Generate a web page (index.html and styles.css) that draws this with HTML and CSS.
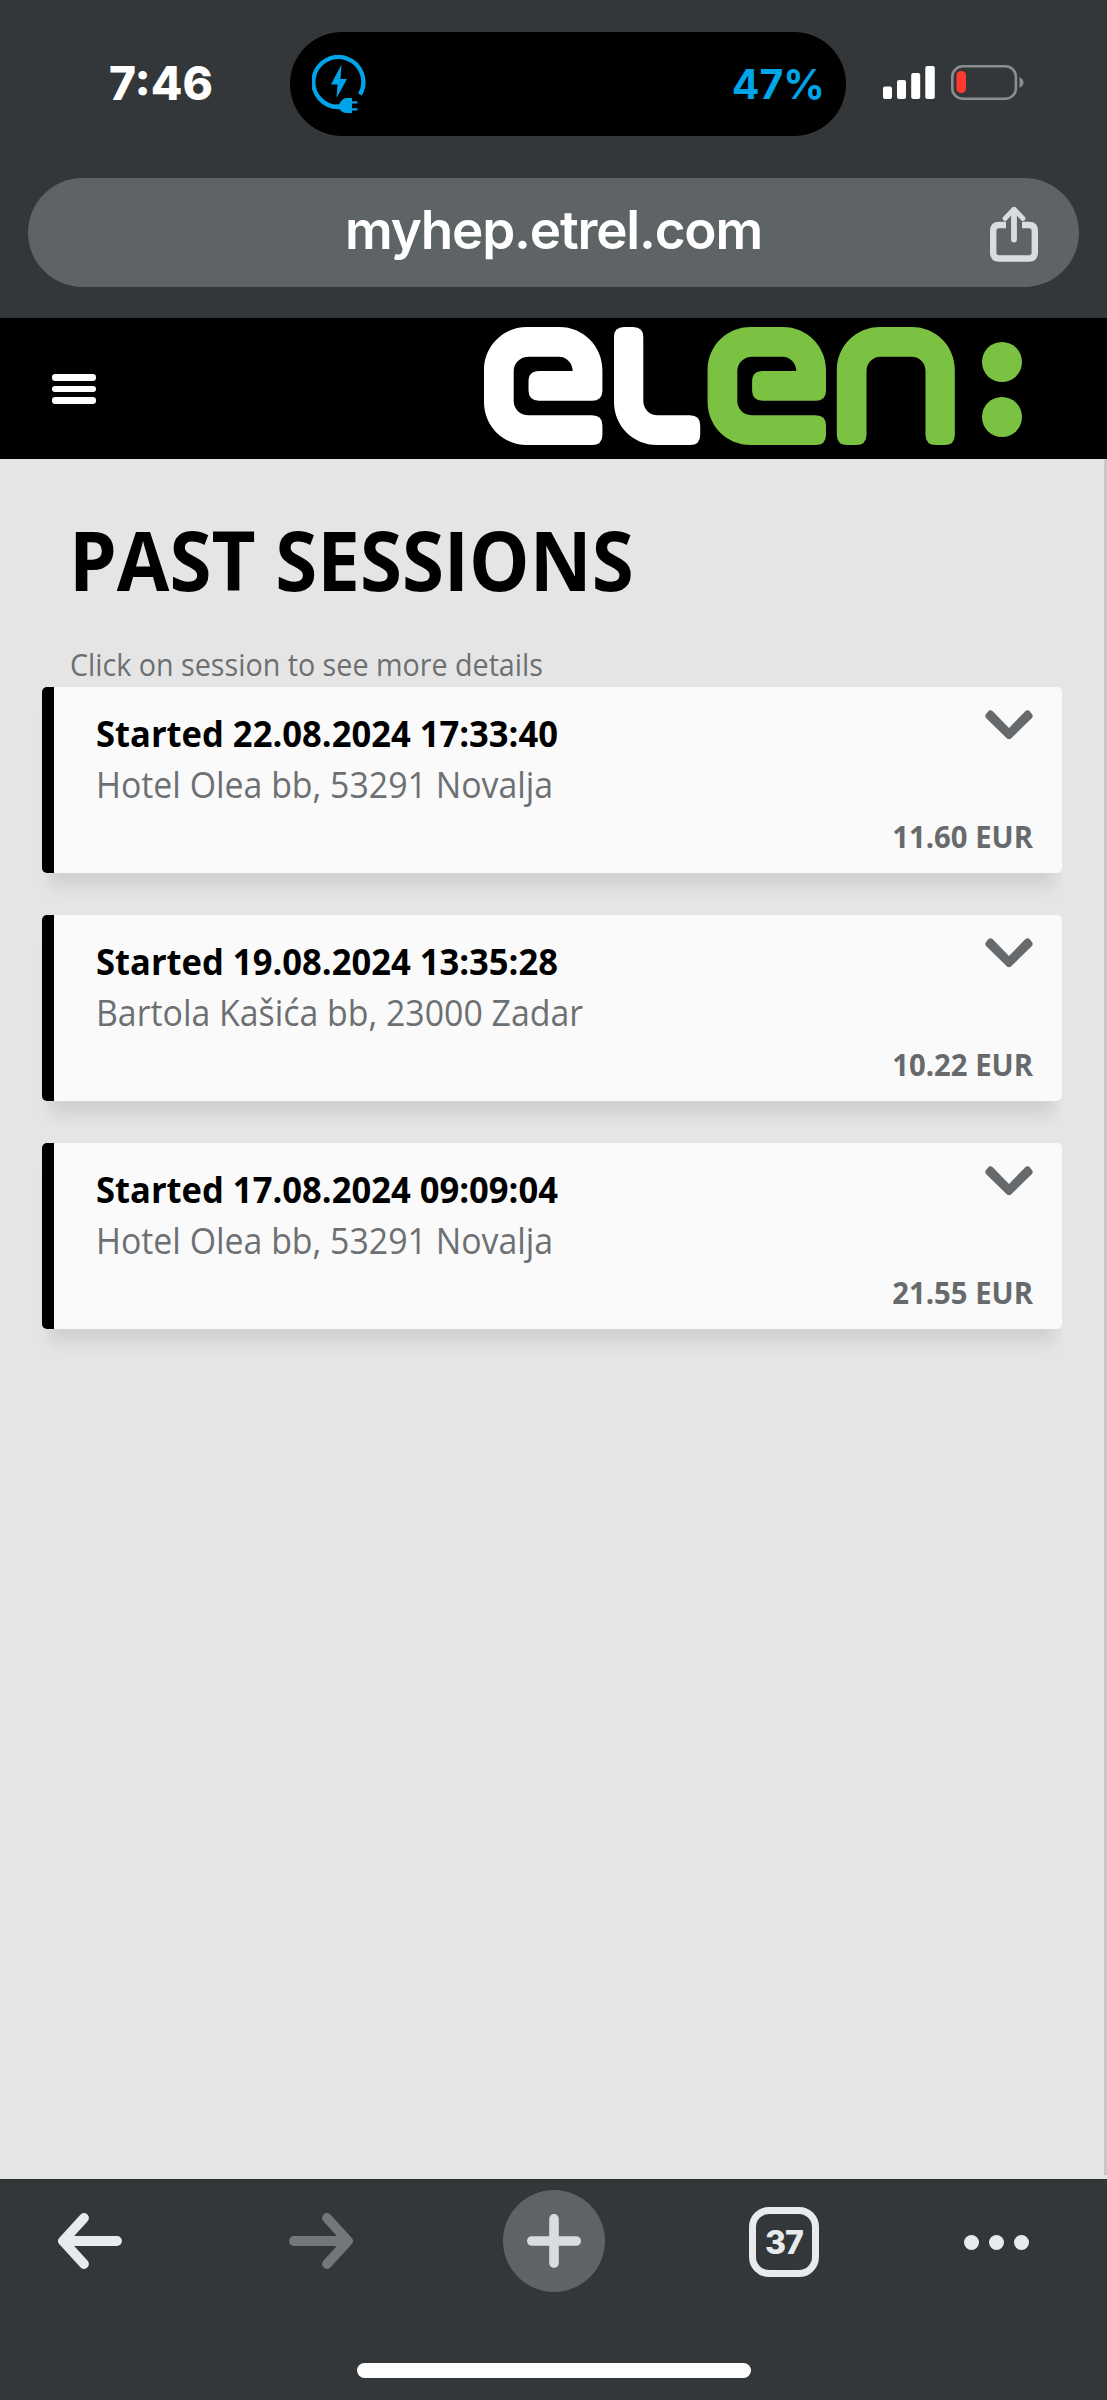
FILE: index.html
```html
<!DOCTYPE html>
<html lang="en">
<head>
    <meta charset="UTF-8">
    <meta name="viewport" content="width=device-width, initial-scale=1.0">
    <title>Past sessions - myhep.etrel.com</title>
    <link rel="stylesheet" href="styles.css">
</head>
<body>
    <div class="browser-top">
        <div class="status-bar">
            <span class="time">7:46</span>
            <div class="island">
                <svg class="charge-icon" width="56" height="60" viewBox="0 0 56 60">
                    <path d="M27 52A25 25 0 1 1 48 39.500" fill="none" stroke="#00a4e8" stroke-width="4.300"/>
                    <path d="M29.500 9.500L19 29.500h6.500L24.500 43 35 24h-6.500z" fill="#00a4e8"/>
                    <path d="M24 49.500h3c1.500-3 4-6.500 8-6.500h5v3.200h5.500v2.300H40v4.800h5.500v2.300H40V58h-5c-4 0-6.500-2-8-4.500h-3z" fill="#00a4e8"/>
                </svg>
                <span class="charge-level">47%</span>
            </div>
            <svg class="signal" width="52" height="34" viewBox="0 0 52 34" fill="#fff">
                <rect x="0" y="20.500" width="9" height="12.500" rx="2"/>
                <rect x="14" y="14" width="9" height="19" rx="2"/>
                <rect x="28.200" y="7" width="9" height="26" rx="2"/>
                <rect x="42.300" y="0" width="9.500" height="33" rx="2"/>
            </svg>
            <svg class="battery" width="73" height="35" viewBox="0 0 73 35">
                <rect x="1.300" y="1.300" width="63.600" height="32.400" rx="10.500" fill="none" stroke="#8b8d8f" stroke-width="2.600"/>
                <rect x="5.500" y="6" width="9.500" height="22" rx="4.500" fill="#ff3b30"/>
                <path d="M68.500 12q4 2.500 4 5.500t-4 5.500z" fill="#8b8d8f"/>
            </svg>
        </div>
        <div class="url-bar">
            <span class="url">myhep.etrel.com</span>
            <svg class="share" width="48" height="56" viewBox="0 0 48 56" fill="none" stroke="#dadce0" stroke-linecap="round" stroke-linejoin="round">
                <path d="M16 19H9Q3.200 19 3.200 25V46.500Q3.200 52.500 9 52.500H39Q44.800 52.500 44.800 46.500V25Q44.800 19 39 19H32" stroke-width="6.400" stroke-linecap="butt"/>
                <path d="M24 4V33.500" stroke-width="5.800"/>
                <path d="M15 12.500L24 3.200 33 12.500" stroke-width="4.800"/>
            </svg>
        </div>
    </div>

    <header class="header">
        <div class="menu">
            <span></span>
            <span></span>
            <span></span>
        </div>
        <svg class="logo" width="539" height="118" viewBox="0 0 539 118">
            <defs>
                <path id="logo-e" d="M43 0H75.500C99 0 118.400 19 118.400 43V63.700Q118.400 73.700 108 73.700H55Q44.500 73.700 44.500 63.500V54.500Q44.500 44 55 44H88.700C88.700 36 82.500 29.700 74.700 29.700H45C36 29.700 29.700 36 29.700 44V74C29.700 82 36 88.300 45 88.300H108Q118.400 88.300 118.400 98.500V108Q118.400 118 108 118H43C19 118 0 99 0 75V43C0 19 19 0 43 0Z"/>
            </defs>
            <use href="#logo-e" fill="#fff"/>
            <path d="M140 0H149Q159.300 0 159.300 10V74C159.300 82 165.500 88.300 173.700 88.300H206Q216.200 88.300 216.200 98.500V108Q216.200 118 206 118H173C149 118 130 99 130 75V10Q130 0 140 0Z" fill="#fff"/>
            <g fill="#7bc142">
                <use href="#logo-e" x="223.600"/>
                <path d="M396 0H427.800C452 0 470.800 19 470.800 43V108Q470.800 118 460.500 118H452Q441.500 118 441.500 108V44C441.500 36 436 29.700 427 29.700H397C388.500 29.700 382.500 36 382.500 44V108Q382.500 118 372 118H363.500Q352.800 118 352.800 108V43C352.800 19 372 0 396 0Z"/>
                <circle cx="518" cy="35" r="20"/>
                <circle cx="518" cy="90" r="20"/>
            </g>
        </svg>
    </header>

    <main class="content">
        <h1>PAST SESSIONS</h1>
        <p class="hint">Click on session to see more details</p>

        <div class="session">
            <div class="session-top">
                <div>
                    <div class="session-title">Started 22.08.2024 17:33:40</div>
                    <div class="session-address">Hotel Olea bb, 53291 Novalja</div>
                </div>
                <svg class="chevron" width="48" height="30" viewBox="0 0 48 30">
                    <path d="M3 1.500Q5.500-1 8 1.500L24 18 40 1.500Q42.500-1 45 1.500L46.500 3.500Q49 6 46.500 8.500L26 28.500Q24 30 22 28.500L1.500 8.500Q-1 6 1.500 3.500Z" fill="#666a6d"/>
                </svg>
            </div>
            <div class="session-price">11.60 EUR</div>
        </div>

        <div class="session">
            <div class="session-top">
                <div>
                    <div class="session-title">Started 19.08.2024 13:35:28</div>
                    <div class="session-address">Bartola Kašića bb, 23000 Zadar</div>
                </div>
                <svg class="chevron" width="48" height="30" viewBox="0 0 48 30">
                    <path d="M3 1.500Q5.500-1 8 1.500L24 18 40 1.500Q42.500-1 45 1.500L46.500 3.500Q49 6 46.500 8.500L26 28.500Q24 30 22 28.500L1.500 8.500Q-1 6 1.500 3.500Z" fill="#666a6d"/>
                </svg>
            </div>
            <div class="session-price">10.22 EUR</div>
        </div>

        <div class="session">
            <div class="session-top">
                <div>
                    <div class="session-title">Started 17.08.2024 09:09:04</div>
                    <div class="session-address">Hotel Olea bb, 53291 Novalja</div>
                </div>
                <svg class="chevron" width="48" height="30" viewBox="0 0 48 30">
                    <path d="M3 1.500Q5.500-1 8 1.500L24 18 40 1.500Q42.500-1 45 1.500L46.500 3.500Q49 6 46.500 8.500L26 28.500Q24 30 22 28.500L1.500 8.500Q-1 6 1.500 3.500Z" fill="#666a6d"/>
                </svg>
            </div>
            <div class="session-price">21.55 EUR</div>
        </div>
        <div class="scrollbar"></div>
    </main>

    <footer class="browser-bottom">
        <nav class="toolbar">
            <svg class="back" width="66" height="56" viewBox="0 0 66 56" fill="none" stroke="#e8ebee" stroke-width="9.800" stroke-linecap="round" stroke-linejoin="round">
                <path d="M60 28H6M27 5L6 28 27 51"/>
            </svg>
            <svg class="forward" width="66" height="56" viewBox="0 0 66 56" fill="none" stroke="#757678" stroke-width="9.800" stroke-linecap="round" stroke-linejoin="round">
                <path d="M6 28H60M39 5L60 28 39 51"/>
            </svg>
            <div class="new-tab">
                <svg width="54" height="54" viewBox="0 0 54 54" stroke="#dadce0" stroke-width="9.600" stroke-linecap="round">
                    <path d="M27 4.800V49.200M4.800 27H49.200"/>
                </svg>
            </div>
            <div class="tabs">37</div>
            <div class="more">
                <span></span>
                <span></span>
                <span></span>
            </div>
        </nav>
        <div class="home-indicator"></div>
    </footer>
</body>
</html>
```

FILE: styles.css
```css
* {
    box-sizing: border-box;
}

body {
    margin: 0;
    height: 2400px;
    display: flex;
    flex-direction: column;
    background: #e5e5e5;
    font-family: "Open Sans", "Noto Sans", sans-serif;
}

svg {
    display: block;
    flex-shrink: 0;
}

/* Browser top */
.browser-top {
    height: 318px;
    background: #333739;
    font-family: Inter, "Liberation Sans", sans-serif;
    color: #fff;
}

.status-bar {
    display: flex;
    align-items: center;
    height: 178px;
    padding: 0 0 11px 109px;
}

.time {
    width: 181px;
    padding-bottom: 2px;
    font-size: 46px;
    font-weight: 800;
}

.island {
    display: flex;
    justify-content: space-between;
    align-items: center;
    width: 556px;
    height: 104px;
    padding: 0 21px;
    background: #000;
    border-radius: 52px;
}

.charge-icon {
    margin: 2px 0 0 1px;
}

.charge-level {
    color: #00a4e8;
    font-size: 41px;
    font-weight: 700;
}

.signal {
    margin: -1px 0 0 37px;
}

.battery {
    margin: -2px 0 0 16px;
}

.url-bar {
    display: flex;
    align-items: center;
    height: 109px;
    margin: 0 28px;
    padding: 0 41px;
    background: #5e6366;
    border-radius: 55px;
}

.url {
    flex: 1;
    padding: 0 0 6px 48px;
    text-align: center;
    font-size: 53px;
    font-weight: 600;
    letter-spacing: -1.200px;
}

.share {
    margin-top: 3px;
}

/* Page header */
.header {
    display: flex;
    justify-content: space-between;
    align-items: center;
    height: 141px;
    padding: 0 84px 5px 52px;
    background: #000;
}

.menu {
    display: grid;
    gap: 5px;
    padding-top: 6px;
}

.menu span {
    width: 44px;
    height: 6.600px;
    background: #fff;
    border-radius: 3.300px;
}

/* Sessions */
.content {
    position: relative;
    flex: 1;
    padding: 58px 45px 0 42px;
}

h1 {
    margin: 0 0 43px 27px;
    font-size: 83px;
    line-height: 84px;
    font-weight: 700;
    transform: scaleX(0.918);
    transform-origin: left;
}

.hint {
    margin: 0 0 3px 28px;
    color: #6c7073;
    font-size: 31px;
    line-height: 40px;
    transform: scaleX(0.925);
    transform-origin: left;
}

.session {
    height: 186px;
    margin-bottom: 42px;
    padding: 22px 29px 0 42px;
    background: #fafafa;
    border-left: 12px solid #000;
    border-radius: 5px;
    box-shadow: 0 22px 15px -8px rgba(0, 0, 0, 0.09);
    clip-path: inset(0 0 -40px -20px);
}

.session-top {
    display: flex;
    justify-content: space-between;
}

.session-title {
    font-size: 36px;
    line-height: 50px;
    font-weight: 700;
    transform: scaleX(0.96);
    transform-origin: left;
}

.session-address {
    margin-top: 1px;
    color: #6c7073;
    font-size: 36px;
    line-height: 50px;
    transform: scaleX(0.94);
    transform-origin: left;
}

.chevron {
    margin-top: 1px;
}

.session-price {
    margin-top: 6px;
    color: #666a6d;
    text-align: right;
    font-size: 31px;
    line-height: 40px;
    font-weight: 700;
    transform: scaleX(0.944);
    transform-origin: right;
}

.scrollbar {
    position: absolute;
    top: 0;
    right: 0;
    bottom: 4px;
    width: 3px;
    background: #c8c8c8;
}

/* Browser bottom */
.browser-bottom {
    height: 221px;
    background: #333739;
    border-top: 1px solid #2d312d;
    font-family: Inter, "Liberation Sans", sans-serif;
}

.toolbar {
    display: flex;
    align-items: center;
    height: 102px;
    margin: 10px 0 0 57px;
}

.forward {
    margin-left: 165px;
}

.new-tab {
    display: flex;
    justify-content: center;
    align-items: center;
    width: 102px;
    height: 102px;
    margin-left: 149px;
    background: #5e6366;
    border-radius: 50%;
}

.tabs {
    width: 70px;
    height: 70px;
    margin: 2px 0 0 144px;
    border: 7.500px solid #e8ebee;
    border-radius: 20px;
    color: #e8ebee;
    text-align: center;
    font-size: 32px;
    line-height: 58px;
    font-weight: 800;
    letter-spacing: -1px;
}

.more {
    display: flex;
    gap: 10px;
    margin: 3px 0 0 145px;
}

.more span {
    width: 15px;
    height: 15px;
    background: #e8ebee;
    border-radius: 50%;
}

.home-indicator {
    width: 394px;
    height: 15px;
    margin: 71px auto 0;
    background: #fdfdfd;
    border-radius: 8px;
}
```
